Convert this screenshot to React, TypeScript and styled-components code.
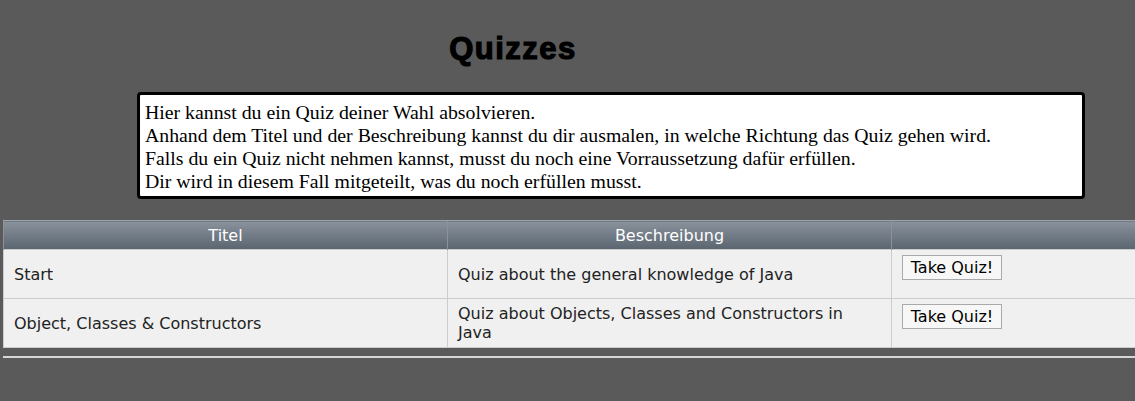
import styled, { createGlobalStyle } from "styled-components";

const GlobalStyle = createGlobalStyle`
  html, body {
    margin: 0;
    padding: 0;
    background: #5a5a5a;
    overflow: hidden;
  }
  body {
    font-family: "DejaVu Sans", Verdana, sans-serif;
  }
`;

interface Quiz {
  id: number;
  title: string;
  description: string;
}

const quizzes: Quiz[] = [
  { id: 1, title: "Start", description: "Quiz about the general knowledge of Java" },
  {
    id: 2,
    title: "Object, Classes & Constructors",
    description: "Quiz about Objects, Classes and Constructors in Java",
  },
];

const Page = styled.div`
  padding: 3px 0 0 3px;
  width: 1400px;
`;

const Title = styled.h1`
  margin: 0;
  padding: 28px 0 0 0;
  width: 1020px;
  text-align: center;
  font-family: "Liberation Sans", Arial, sans-serif;
  font-size: 31px;
  font-weight: 700;
  letter-spacing: 1.5px;
  line-height: 35px;
  color: #000;
  -webkit-text-stroke: 1.2px #000;
`;

const InfoBox = styled.div`
  margin: 26px 0 0 134px;
  width: 932px;
  padding: 6px 5px 3px 5px;
  background: #fff;
  border: 3px solid #000;
  border-radius: 4px;
  font-family: "Liberation Serif", "Times New Roman", serif;
  font-size: 19.8px;
  line-height: 23px;
  color: #000;
`;

const Table = styled.table`
  margin-top: 21px;
  width: 1333px;
  border-collapse: collapse;
  border: 1px solid #888;
  font-size: 16px;
  table-layout: fixed;
`;

const HeadCell = styled.th`
  height: 28px;
  padding: 0 10px;
  font-weight: normal;
  color: #fff;
  text-align: center;
  background: linear-gradient(to bottom, #8a929c, #5a6570);
  border-left: 1px solid #8a929c;
  border-top: 1px solid #9aa2aa;
`;

const Cell = styled.td<{ $top?: boolean }>`
  height: 38px;
  padding: 5px 10px;
  background: #f0f0f0;
  color: #222;
  border: 1px solid #cccccc;
  vertical-align: ${(p) => (p.$top ? "top" : "middle")};
  line-height: 19px;
`;

const Button = styled.button`
  box-sizing: border-box;
  font-family: "DejaVu Sans", Verdana, sans-serif;
  font-size: 16px;
  line-height: 20px;
  color: #000;
  background: #f7f7f7;
  border: 1px solid #a9a9a9;
  padding: 0 6px;
  height: 25px;
  width: 100px;
  cursor: pointer;
`;

const Rule = styled.hr`
  margin: 8px 0 0 0;
  width: 1400px;
  border: none;
  border-top: 2px solid #d6d6d6;
`;

export default function App() {
  return (
    <>
      <GlobalStyle />
      <Page>
        <Title>Quizzes</Title>
        <InfoBox>
          Hier kannst du ein Quiz deiner Wahl absolvieren.
          <br />
          Anhand dem Titel und der Beschreibung kannst du dir ausmalen, in welche Richtung das Quiz gehen wird.
          <br />
          Falls du ein Quiz nicht nehmen kannst, musst du noch eine Vorraussetzung dafür erfüllen.
          <br />
          Dir wird in diesem Fall mitgeteilt, was du noch erfüllen musst.
        </InfoBox>
        <Table>
          <thead>
            <tr>
              <HeadCell>Titel</HeadCell>
              <HeadCell>Beschreibung</HeadCell>
              <HeadCell></HeadCell>
            </tr>
          </thead>
          <tbody>
            {quizzes.map((q) => (
              <tr key={q.id}>
                <Cell>{q.title}</Cell>
                <Cell>{q.description}</Cell>
                <Cell $top>
                  <Button>Take Quiz!</Button>
                </Cell>
              </tr>
            ))}
          </tbody>
        </Table>
        <Rule />
      </Page>
    </>
  );
}
